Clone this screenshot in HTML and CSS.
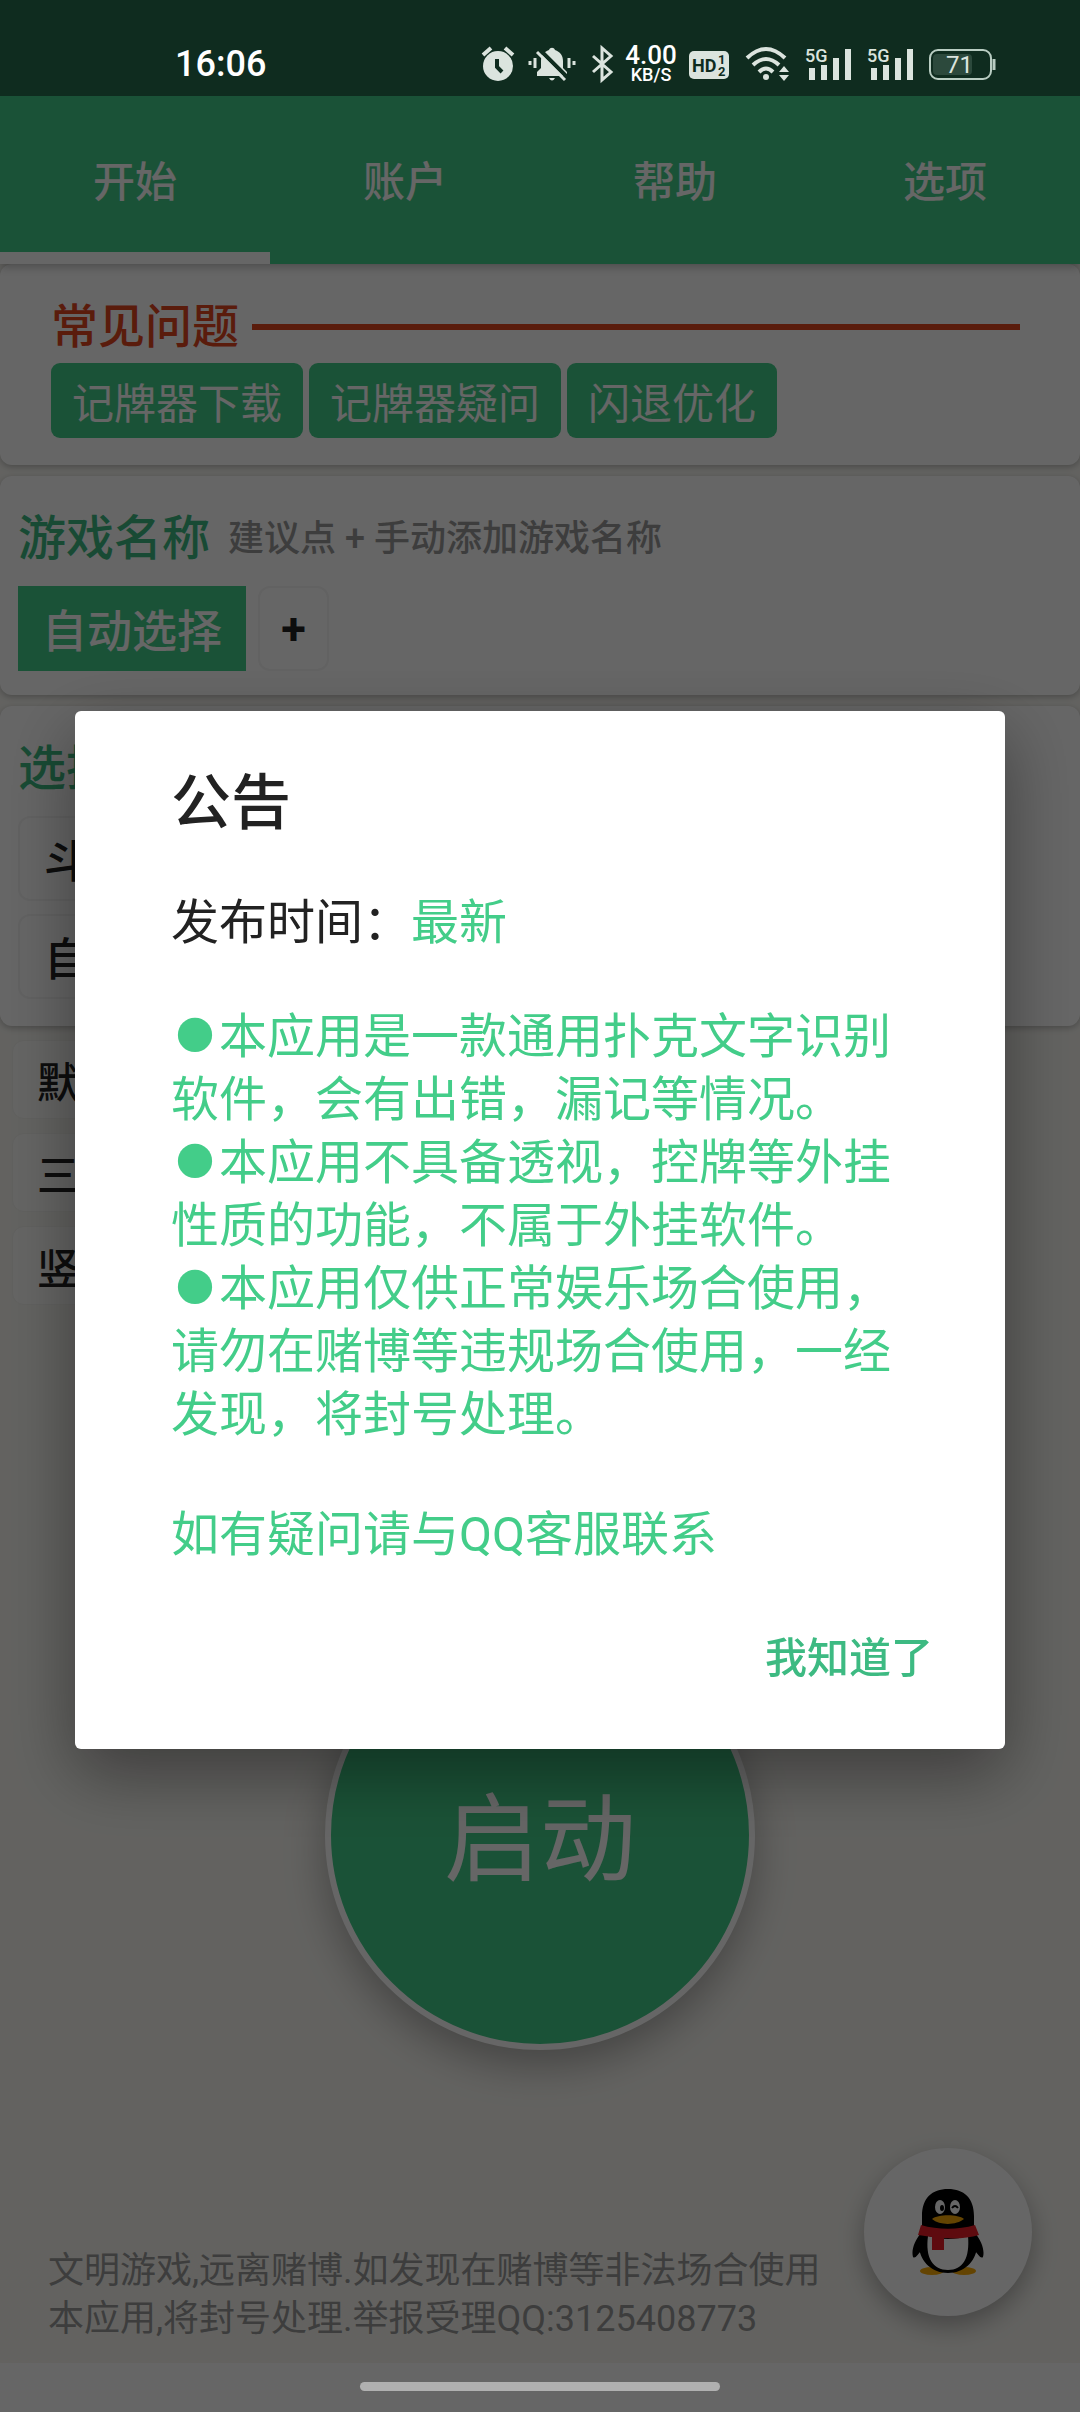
FILE: index.html
```html
<!DOCTYPE html>
<html lang="zh-CN">
<head>
    <meta charset="UTF-8">
    <meta name="viewport" content="width=device-width, initial-scale=1.0">
    <title>记牌器</title>
    <link rel="stylesheet" href="styles.css">
</head>
<body>

<header class="status-bar">
    <span class="time">16:06</span>
    <div class="status-icons">
        <svg width="34" height="36" viewBox="0 0 34 36">
            <circle cx="16" cy="20" r="15" fill="#dbe4de"/>
            <path d="M1 9l8-7M31 9l-8-7" stroke="#dbe4de" stroke-width="4"/>
            <path d="M15 13v8l5 5" fill="none" stroke="#0f2c1f" stroke-width="4"/>
        </svg>
        <svg width="52" height="36" viewBox="0 0 52 36">
            <path d="M9 30v-4l4-4v-7c0-6 3-9 8-11 1-3 5-3 6 0 5 2 8 5 8 11v7l4 4v4z" fill="#dbe4de"/>
            <path d="M21 32h6q-3 5-6 0z" fill="#dbe4de"/>
            <path d="M7 12v10M2 15v4M41 12v10M46 15v4" stroke="#dbe4de" stroke-width="3"/>
            <path d="M12 4l28 28" stroke="#0f2c1f" stroke-width="4"/>
            <path d="M9 6l28 28" stroke="#dbe4de" stroke-width="3"/>
        </svg>
        <svg width="21" height="36" viewBox="0 0 21 36">
            <path d="M1 10l18 16-9 8V2l9 8L1 26" fill="none" stroke="#dbe4de" stroke-width="3"/>
        </svg>
        <div class="speed"><b>4.00</b><span>KB/S</span></div>
        <svg width="44" height="36" viewBox="0 0 44 36">
            <rect y="5" width="40" height="28" rx="5" fill="#dbe4de"/>
            <text x="3" y="26" class="hd">HD</text>
            <text x="29" y="18" class="sim">1</text>
            <text x="29" y="30" class="sim">2</text>
        </svg>
        <svg width="48" height="36" viewBox="0 0 48 36">
            <g fill="none" stroke="#dbe4de" stroke-width="4">
                <path d="M2 12q19-18 38 0"/>
                <path d="M8 19q13-12 26 0"/>
                <path d="M14 26q7-7 14 0"/>
            </g>
            <circle cx="21" cy="31" r="3" fill="#dbe4de"/>
            <path d="M34 26l5-6 5 6zM34 29l5 6 5-6z" fill="#dbe4de"/>
        </svg>
        <svg width="50" height="36" viewBox="0 0 50 36">
            <text x="0" y="16" class="net">5G</text>
            <path d="M7 22v12M19 19v15M31 12v22M43 3v31" stroke="#dbe4de" stroke-width="6"/>
        </svg>
        <svg width="50" height="36" viewBox="0 0 50 36">
            <text x="0" y="16" class="net">5G</text>
            <path d="M7 22v12M19 19v15M31 12v22M43 3v31" stroke="#dbe4de" stroke-width="6"/>
        </svg>
        <svg width="67" height="36" viewBox="0 0 67 36">
            <rect x="1" y="4" width="61" height="29" rx="8" fill="none" stroke="#b9cdc2" stroke-width="2"/>
            <rect x="4" y="8" width="39" height="21" rx="4" fill="#2c493c"/>
            <path d="M65 13v11" stroke="#b9cdc2" stroke-width="3"/>
            <text x="17" y="27" class="power">71</text>
        </svg>
    </div>
</header>

<nav class="tabs">
    <a class="active" href="#start">开始</a>
    <a href="#account">账户</a>
    <a href="#help">帮助</a>
    <a href="#options">选项</a>
</nav>

<main>
    <section class="card faq">
        <h2>常见问题</h2>
        <div class="faq-buttons">
            <button>记牌器下载</button>
            <button>记牌器疑问</button>
            <button>闪退优化</button>
        </div>
    </section>

    <section class="card">
        <h2>游戏名称 <small>建议点 + 手动添加游戏名称</small></h2>
        <div class="row">
            <button class="chip selected">自动选择</button>
            <button class="chip add">+</button>
        </div>
    </section>

    <section class="card">
        <h2>选择</h2>
        <div class="column">
            <button class="chip">斗地主</button>
            <button class="chip">自定义</button>
        </div>
    </section>

    <div class="modes">
        <button>默认</button>
        <button>三人</button>
        <button>竖屏</button>
    </div>

    <button class="launch">启动</button>
</main>

<footer>
    <p>文明游戏,远离赌博.如发现在赌博等非法场合使用本应用,将封号处理.举报受理QQ:3125408773</p>
    <button class="qq" aria-label="QQ客服">
        <svg width="72" height="88" viewBox="0 0 72 88">
            <ellipse cx="20" cy="83" rx="12" ry="4" fill="#faab07"/>
            <ellipse cx="52" cy="83" rx="12" ry="4" fill="#faab07"/>
            <path d="M9 45C3 52-1 62 1 69c2 2 5-2 9-8zM63 45c6 7 10 17 8 24-2 2-5-2-9-8z" fill="#000"/>
            <path d="M10 28C10 10 20 1 36 1s26 9 26 27v14c3 6 4 12 3 18-2 14-13 25-29 25S9 74 7 60c-1-6 0-12 3-18z" fill="#000"/>
            <path d="M16 48c13 4 27 4 40 0 2 22-5 34-20 34S13 70 16 48z" fill="#fff"/>
            <ellipse cx="28" cy="19" rx="5" ry="7" fill="#fff"/>
            <ellipse cx="43" cy="19" rx="5" ry="7" fill="#fff"/>
            <ellipse cx="30" cy="20" rx="2" ry="3" fill="#000"/>
            <path d="M40 20q3-4 6 0" fill="none" stroke="#000" stroke-width="2"/>
            <path d="M20 31c6-5 26-5 32 0-7 6-24 7-32 0z" fill="#faab07"/>
            <path d="M9 37c17 5 37 5 54 0l4 10c-10 3-23 4-35 3v12H20V49L6 47z" fill="#eb1c26"/>
        </svg>
    </button>
</footer>
<div class="home-area"></div>

<div class="overlay">
    <div class="dialog" role="dialog" aria-labelledby="notice-title">
        <h1 id="notice-title">公告</h1>
        <p class="date">发布时间：<span>最新</span></p>
        <div class="notice">
            <p><span class="dot">●</span>本应用是一款通用扑克文字识别软件，会有出错，漏记等情况。</p>
            <p><span class="dot">●</span>本应用不具备透视，控牌等外挂性质的功能，不属于外挂软件。</p>
            <p><span class="dot">●</span>本应用仅供正常娱乐场合使用，请勿在赌博等违规场合使用，一经发现，将封号处理。</p>
        </div>
        <p class="contact">如有疑问请与QQ客服联系</p>
        <button class="confirm">我知道了</button>
    </div>
    <div class="home-handle"></div>
</div>

</body>
</html>
```
FILE: styles.css
```css
* {
    box-sizing: border-box;
}
body {
    margin: 0;
    min-height: 100vh;
    display: flex;
    flex-direction: column;
    background-color: #f7f6f1;
    font-family: Roboto, "Noto Sans CJK SC", sans-serif;
}
h1, h2, p {
    margin: 0;
    font-weight: 400;
}
button {
    border: none;
    padding: 0;
    font-family: inherit;
    cursor: pointer;
}

/* status bar stays above the dimmed page */
.status-bar {
    position: relative;
    z-index: 2;
    height: 96px;
    padding: 32px 84px 0 175px;
    display: flex;
    justify-content: space-between;
    align-items: center;
    background-color: #0f2c1f;
    color: #fff;
}
.time {
    font-size: 36px;
    font-weight: 500;
}
.status-icons {
    display: flex;
    align-items: center;
    gap: 12px;
}
.status-icons svg {
    overflow: visible;
}
.speed {
    width: 52px;
    display: flex;
    flex-direction: column;
    align-items: center;
    font-size: 18px;
    font-weight: 500;
    line-height: 18px;
}
.speed b {
    font-size: 26px;
    font-weight: 500;
    line-height: 22px;
}
.status-icons text {
    fill: #dbe4de;
    font-size: 18px;
    font-weight: 500;
}
.status-icons .hd {
    fill: #0f2c1f;
    font-weight: 700;
    font-size: 18px;
}
.status-icons .sim {
    fill: #0f2c1f;
    font-weight: 700;
    font-size: 13px;
}
.status-icons .power {
    font-size: 24px;
    font-weight: 400;
}

.tabs {
    position: relative;
    height: 168px;
    display: flex;
    background-color: #43cd89;
    box-shadow: 0 2px 10px rgba(0, 0, 0, 0.3);
}
.tabs a {
    flex: 1;
    display: flex;
    justify-content: center;
    align-items: center;
    border-top: 8px solid transparent;
    border-bottom: 12px solid transparent;
    color: #fff;
    font-size: 42px;
    font-weight: 500;
    text-decoration: none;
}
.tabs .active {
    border-bottom-color: #fff;
}

main {
    flex: 1;
    display: flex;
    flex-direction: column;
}
.card {
    margin-bottom: 11px;
    padding: 27px 18px 24px;
    background-color: #fff;
    border-radius: 12px;
    box-shadow: 0 2px 6px rgba(0, 0, 0, 0.25);
}
.card h2 {
    display: flex;
    align-items: center;
    gap: 18px;
    margin-bottom: 11px;
    color: #3dba82;
    font-size: 48px;
    font-weight: 500;
    line-height: 72px;
}
.card small {
    color: #999;
    font-size: 36px;
}
.faq {
    padding: 27px 60px 27px 51px;
}
.faq h2 {
    gap: 13px;
    margin-bottom: 0;
    color: #e1461f;
    font-size: 47px;
}
.faq h2::after {
    content: "";
    flex: 1;
    height: 6px;
    background-color: #e1461f;
}
.faq-buttons {
    display: flex;
    gap: 6px;
}
.faq-buttons button {
    height: 75px;
    padding: 0 21px;
    border-radius: 9px;
    background-color: #43cd89;
    color: #fff;
    font-size: 42px;
}
.row {
    display: flex;
    gap: 12px;
}
.column {
    display: flex;
    flex-direction: column;
    align-items: flex-start;
    gap: 13px;
    padding-bottom: 3px;
}
.chip {
    height: 85px;
    padding: 0 24px;
    border: 2px solid #f4f4f4;
    border-radius: 12px;
    background-color: #fff;
    color: #222;
    font-size: 45px;
    font-weight: 500;
}
.chip.selected {
    border: none;
    border-radius: 0;
    background-color: #43cd89;
    color: #fff;
}
.chip.add {
    width: 71px;
    padding: 0;
    font-weight: 700;
}
.modes {
    display: flex;
    flex-direction: column;
    align-items: flex-start;
    gap: 14px;
    padding: 3px 12px;
}
.modes button {
    height: 79px;
    padding: 0 24px;
    border: 1px solid #f2f2ee;
    border-radius: 12px;
    background-color: #fcfcfa;
    color: #222;
    font-size: 42px;
    font-weight: 500;
}

.launch {
    width: 430px;
    height: 430px;
    margin: auto auto 98px;
    padding-bottom: 8px;
    border: 6px solid #fff;
    border-radius: 50%;
    background-color: #43cd89;
    box-shadow: 0 16px 40px rgba(0, 0, 0, 0.3);
    color: #fff;
    font-size: 96px;
}

footer {
    display: flex;
    align-items: flex-end;
    gap: 24px;
    padding: 0 48px 20px;
}
footer p {
    flex: 1;
    color: #999;
    font-size: 36px;
    line-height: 48px;
}
.qq {
    width: 168px;
    height: 168px;
    margin-bottom: 27px;
    display: flex;
    justify-content: center;
    align-items: center;
    border-radius: 50%;
    background-color: #fff;
    box-shadow: 0 10px 26px rgba(0, 0, 0, 0.3);
}
.home-area {
    height: 49px;
    background-color: #fff;
}

.overlay {
    position: fixed;
    inset: 0;
    display: flex;
    align-items: center;
    padding: 96px 75px 49px;
    background-color: rgba(0, 0, 0, 0.6);
}
.dialog {
    flex: 1;
    display: flex;
    flex-direction: column;
    padding: 48px 72px 42px 96px;
    border-radius: 6px;
    background-color: #fff;
    box-shadow: 0 24px 70px rgba(0, 0, 0, 0.4);
    color: #222;
    font-size: 48px;
    line-height: 63px;
}
.dialog h1 {
    margin-bottom: 42px;
    font-size: 60px;
    font-weight: 500;
    line-height: 90px;
}
.date {
    margin-bottom: 51px;
}
.date span, .notice, .contact {
    color: #43cd89;
}
.notice {
    padding-right: 24px;
}
.dot {
    display: inline-block;
    width: 48px;
    font-size: 38px;
    line-height: 38px;
    text-align: center;
    vertical-align: 4px;
}
.contact {
    margin: 57px 0 36px;
}
.confirm {
    align-self: flex-end;
    height: 105px;
    background: none;
    color: #3dba82;
    font-size: 42px;
    font-weight: 500;
}
.home-handle {
    position: absolute;
    bottom: 21px;
    left: 50%;
    width: 360px;
    height: 9px;
    margin-left: -180px;
    border-radius: 5px;
    background-color: #b0b0b0;
}
```
